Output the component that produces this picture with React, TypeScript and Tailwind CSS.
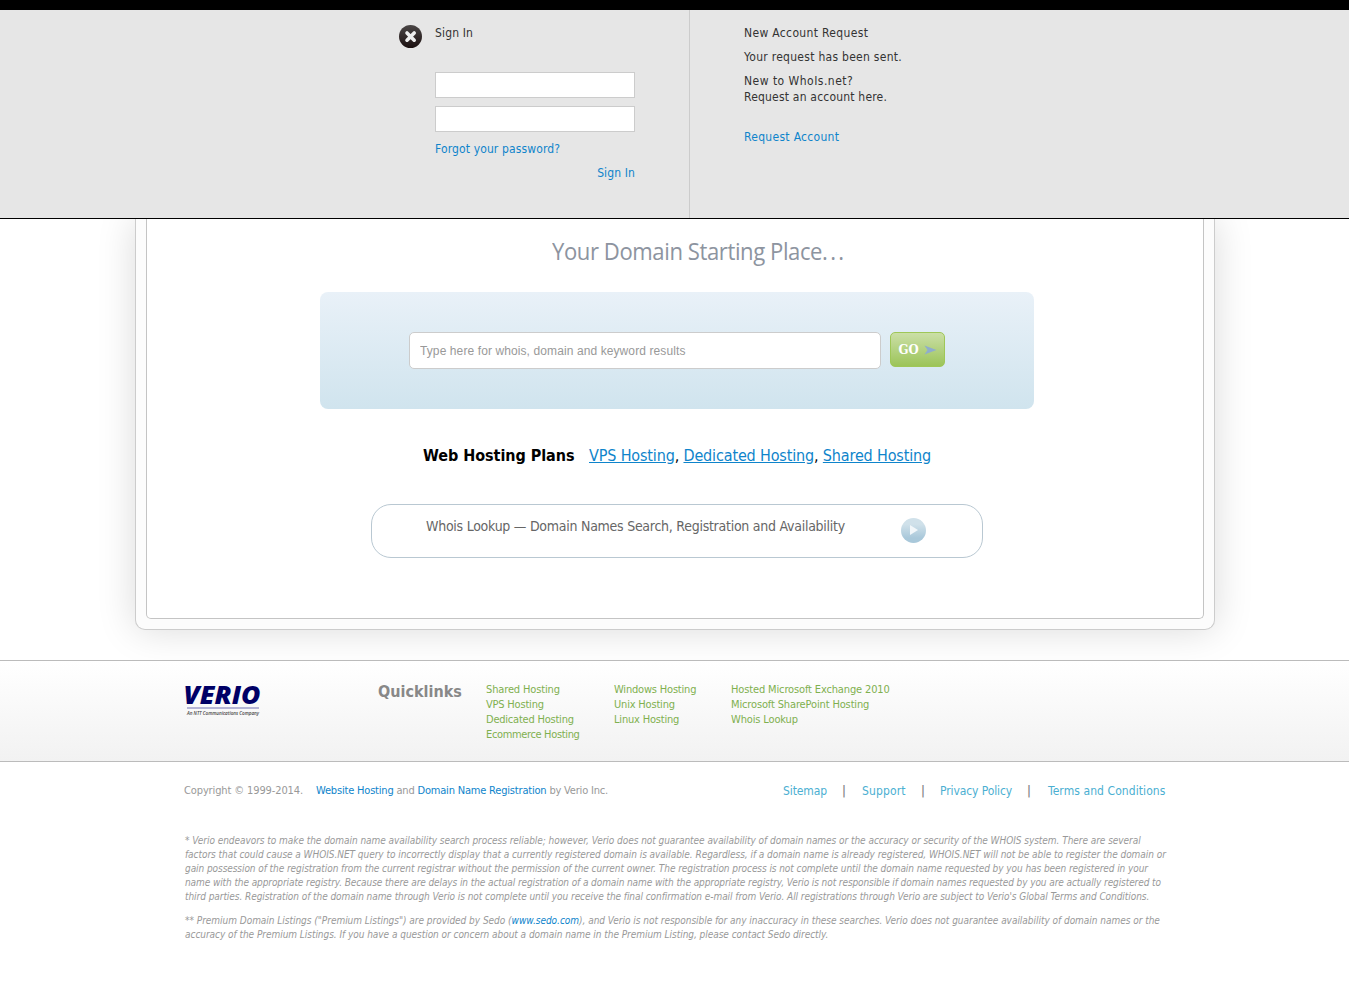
import React from "react";

const LEGAL_ONE = [
  { text: "* Verio endeavors to make the domain name availability search process reliable; however, Verio does not guarantee availability of domain names or the accuracy or security of the WHOIS system. There are several", className: "tracking-[-0.044px]" },
  { text: "factors that could cause a WHOIS.NET query to incorrectly display that a currently registered domain is available. Regardless, if a domain name is already registered, WHOIS.NET will not be able to register the domain or", className: "tracking-[-0.046px]" },
  { text: "gain possession of the registration from the current registrar without the permission of the current owner. The registration process is not complete until the domain name requested by you has been registered in your", className: "tracking-[-0.066px]" },
  { text: "name with the appropriate registry. Because there are delays in the actual registration of a domain name with the appropriate registry, Verio is not responsible if domain names requested by you are actually registered to", className: "tracking-[-0.092px]" },
  { text: "third parties. Registration of the domain name through Verio is not complete until you receive the final confirmation e-mail from Verio. All registrations through Verio are subject to Verio's Global Terms and Conditions.", className: "tracking-[-0.06px]" },
];

function SignInPanel() {
  return (
    <section className="flex h-[219px] border-t-[10px] border-b border-black bg-[#e6e6e6] text-[12px] leading-4 text-[#333]">
      <div className="flex w-[690px] border-r border-[#ccc] pl-[399px]">
        <svg className="mt-[15px] h-[23px] w-[23px] shrink-0" viewBox="0 0 23 23">
          <defs>
            <linearGradient id="close" x1="0" y1="0" x2="0" y2="1">
              <stop offset="0" stopColor="#4a4646" />
              <stop offset="1" stopColor="#1c1010" />
            </linearGradient>
          </defs>
          <circle cx="11.5" cy="11.5" r="11.5" fill="url(#close)" />
          <path d="M8 8l7.2 7.2M15.2 8L8 15.2" stroke="#eee" strokeWidth="3.6" strokeLinecap="round" />
        </svg>
        <form className="ml-[13px] flex w-[200px] flex-col pt-[15px]">
          <h2 className="tracking-[0.15px]">Sign In</h2>
          <input className="mt-[31px] h-[26px] border border-[#ccc] bg-white" />
          <input type="password" className="mt-2 h-[26px] border border-[#ccc] bg-white" />
          <a className="mt-[9px] tracking-[0.13px] whitespace-nowrap text-[#0e84cb]">Forgot your password?</a>
          <a className="mt-2 self-end tracking-[0.12px] text-[#0e84cb]">Sign In</a>
        </form>
      </div>
      <div className="flex flex-col pt-[15px] pl-[54px] whitespace-nowrap">
        <h2 className="tracking-[0.34px]">New Account Request</h2>
        <p className="mt-2 tracking-[0.28px]">Your request has been sent.</p>
        <p className="mt-2 tracking-[0.48px]">New to WhoIs.net?</p>
        <p className="tracking-[0.2px]">Request an account here.</p>
        <a className="mt-6 tracking-[0.3px] text-[#0e84cb]">Request Account</a>
      </div>
    </section>
  );
}

function Search() {
  return (
    <main className="h-[441px] overflow-hidden">
      <div className="ml-[135px] h-[411px] w-[1080px] rounded-b-[10px] border border-t-0 border-[#ccc] bg-[#fcfcfc] px-[10px] pb-[10px] shadow-[0_0_38px_rgba(0,0,0,0.15)]">
        <div className="flex h-[400px] flex-col rounded-b-[5px] border border-t-0 border-[#c4c4c4] bg-white">
          <h1 className="mt-[16px] ml-[405px] origin-left scale-x-[0.92] self-start font-['Open_Sans',sans-serif] text-[24px] leading-8 tracking-[-0.45px] whitespace-nowrap text-[#8d94a0]">
            Your Domain Starting Place<span className="tracking-[2.4px]">...</span>
          </h1>
          <form className="mt-[25px] ml-[173px] flex h-[117px] w-[714px] rounded-lg bg-linear-to-b from-[#e9f1f8] to-[#d0e4ee] pt-[40px] pl-[89px]">
            <input
              className="h-[37px] w-[472px] rounded-[5px] border border-[#ccc] bg-white px-[10px] font-['Liberation_Sans',sans-serif] text-[12px] tracking-[0.1px] placeholder:text-[#999]"
              placeholder="Type here for whois, domain and keyword results"
            />
            <button
              type="button"
              className="ml-[9px] flex h-[35px] w-[55px] items-center rounded-[5px] border border-[#9fc757] bg-linear-to-b from-[#cbdfa6] to-[#9cc457] pt-px pl-[7px] font-['DejaVu_Serif_Condensed','DejaVu_Serif',serif] text-[13px] font-bold text-white"
            >
              <span className="w-[21px]">GO</span>
              <svg className="ml-[5px] h-[10px] w-[13px]" viewBox="0 0 13 10">
                <path d="M0.5 0.5L12.5 5L0.5 9.5L3.5 5Z" fill="#8fadcc" />
              </svg>
            </button>
          </form>
          <p className="mt-[35px] ml-[276px] flex h-6 items-center text-[16px] whitespace-nowrap text-black">
            <b className="w-[166px] tracking-[-0.05px]">Web Hosting Plans</b>
            <span className="tracking-[-0.15px]">
              <a className="text-[#0e84cb] underline">VPS Hosting</a>, <a className="text-[#0e84cb] underline">Dedicated Hosting</a>,{" "}
              <a className="text-[#0e84cb] underline">Shared Hosting</a>
            </span>
          </p>
          <div className="mt-[36px] ml-[224px] flex h-[54px] w-[612px] rounded-[20px] border border-[#b9c8d2] pl-[54px] whitespace-nowrap">
            <span className="mt-[11px] w-[475px] text-[14px] leading-5 tracking-[-0.26px] text-[#666]">
              Whois Lookup — Domain Names Search, Registration and Availability
            </span>
            <svg className="mt-[13px] h-[25px] w-[25px]" viewBox="0 0 25 25">
              <defs>
                <linearGradient id="play" x1="0" y1="0" x2="0" y2="1">
                  <stop offset="0.25" stopColor="#d0e1ea" />
                  <stop offset="0.8" stopColor="#a9c8da" />
                </linearGradient>
              </defs>
              <circle cx="12.5" cy="12.5" r="12.5" fill="url(#play)" />
              <path d="M9 7L17 12L9 17Z" fill="#f2f7fa" />
            </svg>
          </div>
        </div>
      </div>
    </main>
  );
}

function Quicklinks() {
  return (
    <section className="flex h-[102px] border-y border-[#bbb] bg-linear-to-b from-white to-[#f2f2f2] pl-[184px] whitespace-nowrap">
      <svg className="mt-[24px] h-[34px] w-[80px] overflow-visible" viewBox="0 0 80 34">
        <text x="-0.5" y="19" textLength="77" lengthAdjust="spacingAndGlyphs" fontFamily="Open Sans, sans-serif" fontSize="24" fontWeight="800" fontStyle="italic" fill="#000066">VERIO</text>
        <rect x="3" y="22" width="72" height="2" fill="#b5b5d6" />
        <text x="3" y="30" textLength="72" lengthAdjust="spacingAndGlyphs" fontFamily="Open Sans, sans-serif" fontSize="4.5" fontWeight="600" fontStyle="italic" fill="#444">An NTT Communications Company</text>
      </svg>
      <h3 className="mt-[21px] ml-[114px] w-[108px] text-[16px] leading-5 font-bold text-[#888]">Quicklinks</h3>
      <div className="mt-[21px] flex text-[11px] leading-[15px] text-[#7fb04f]">
        <ul className="w-[128px]">
          <li className="tracking-[-0.14px]">Shared Hosting</li>
          <li className="tracking-[-0.2px]">VPS Hosting</li>
          <li className="tracking-[-0.22px]">Dedicated Hosting</li>
          <li className="tracking-[-0.35px]">Ecommerce Hosting</li>
        </ul>
        <ul className="w-[117px] tracking-[-0.19px]">
          <li>Windows Hosting</li>
          <li>Unix Hosting</li>
          <li>Linux Hosting</li>
        </ul>
        <ul className="tracking-[-0.14px]">
          <li>Hosted Microsoft Exchange 2010</li>
          <li>Microsoft SharePoint Hosting</li>
          <li>Whois Lookup</li>
        </ul>
      </div>
    </section>
  );
}

function Footer() {
  return (
    <footer className="pl-[184px] whitespace-nowrap">
      <div className="flex h-[57px] items-center text-[11px] text-[#999]">
        <span className="w-[132px] pt-px tracking-[-0.12px]">Copyright © 1999-2014.</span>
        <span className="w-[467px] pt-px tracking-[-0.19px]">
          <a className="text-[#0e84cb]">Website Hosting</a> and <a className="text-[#0e84cb]">Domain Name Registration</a> by Verio Inc.
        </span>
        <nav className="flex text-[12px] text-[#4bafd2]">
          <a className="w-[59px] tracking-[-0.1px]">Sitemap</a>
          <b className="w-[20px] text-[#888]">|</b>
          <a className="w-[59px] tracking-[0.15px]">Support</a>
          <b className="w-[19px] text-[#888]">|</b>
          <a className="w-[87px] tracking-[-0.1px]">Privacy Policy</a>
          <b className="w-[21px] text-[#888]">|</b>
          <a className="tracking-[0.08px]">Terms and Conditions</a>
        </nav>
      </div>
      <div className="mt-[15px] pl-px text-[10px] leading-[14px] text-[#999] italic">
        <div>
          {LEGAL_ONE.map((line) => (
            <p key={line.text} className={line.className}>{line.text}</p>
          ))}
        </div>
        <div className="mt-[10px]">
          <p className="tracking-[-0.03px]">
            ** Premium Domain Listings ("Premium Listings") are provided by Sedo (<a className="text-[#0e84cb]">www.sedo.com</a>), and Verio is not responsible for any inaccuracy in these searches. Verio does not guarantee availability of domain names or the
          </p>
          <p className="tracking-[-0.042px]">accuracy of the Premium Listings. If you have a question or concern about a domain name in the Premium Listing, please contact Sedo directly.</p>
        </div>
      </div>
    </footer>
  );
}

export default function App() {
  return (
    <div className="h-[982px] w-[1349px] overflow-hidden bg-white font-['DejaVu_Sans_Condensed','Noto_Sans',sans-serif]">
      <SignInPanel />
      <Search />
      <Quicklinks />
      <Footer />
    </div>
  );
}
